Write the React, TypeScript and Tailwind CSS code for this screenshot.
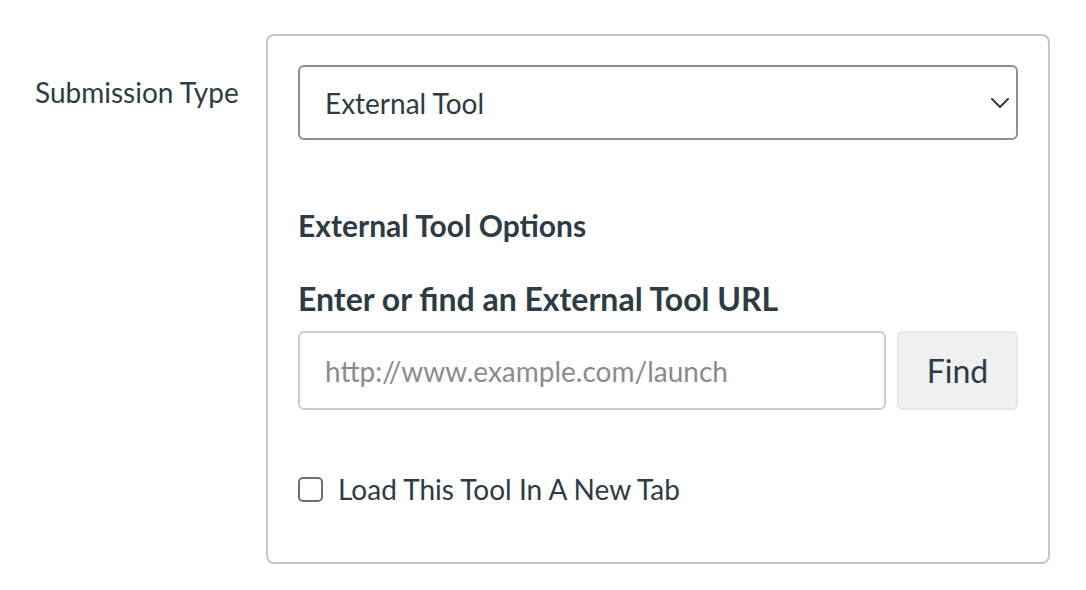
import React from 'react';

const ink = 'text-[#2d3b45]';

function Chevron() {
  return (
    <svg width="18" height="10" viewBox="0 0 18 10" fill="none" className="shrink-0">
      <path d="M1 1l8 8 8-8" stroke="#2d3b45" strokeWidth="2" strokeLinecap="round" strokeLinejoin="round" />
    </svg>
  );
}

export default function App() {
  return (
    <div className="min-h-[590px] w-full bg-white font-['Lato','Liberation_Sans',sans-serif]">
      <div className="flex pl-[35px] pt-[34px]">
        {/* field label */}
        <div className={`w-[231px] pt-[37px] text-[28px] leading-[42px] ${ink}`}>Submission Type</div>

        {/* options panel */}
        <div className="w-[784px] rounded-lg border-2 border-[#c7c7c7] px-[30px] pt-[29px] pb-[60px]">
          <div className="flex h-[75px] items-center justify-between rounded-md border-2 border-[#8a9097] pl-[25px] pr-[7px]">
            <span className={`text-[28px] ${ink}`}>External Tool</span>
            <Chevron />
          </div>

          <h3 className={`mt-[64px] text-[30px] font-bold leading-[42px] ${ink}`}>External Tool Options</h3>

          <h4 className={`mt-[33px] text-[32px] font-bold leading-[40px] ${ink}`}>
            Enter or find an External Tool URL
          </h4>

          <div className="mt-[12px] flex gap-[11px]">
            <input
              type="text"
              placeholder="http://www.example.com/launch"
              className="h-[79px] flex-1 rounded-md border-2 border-[#c7cdd1] bg-white px-[25px] text-[28px] text-[#2d3b45] placeholder:text-[#8b8b8b] focus:outline-none"
            />
            <button className="h-[79px] w-[121px] rounded-md border-2 border-[#e4e7e8] bg-[#eff1f1] text-[32px] text-[#2d3b45]">
              Find
            </button>
          </div>

          <label className="mt-[67px] flex items-center gap-[15px]">
            <span className="h-[25px] w-[25px] rounded-[5px] border-2 border-[#6b6f73] bg-white" />
            <span className={`text-[28px] leading-[25px] ${ink}`}>Load This Tool In A New Tab</span>
          </label>
        </div>
      </div>
    </div>
  );
}
